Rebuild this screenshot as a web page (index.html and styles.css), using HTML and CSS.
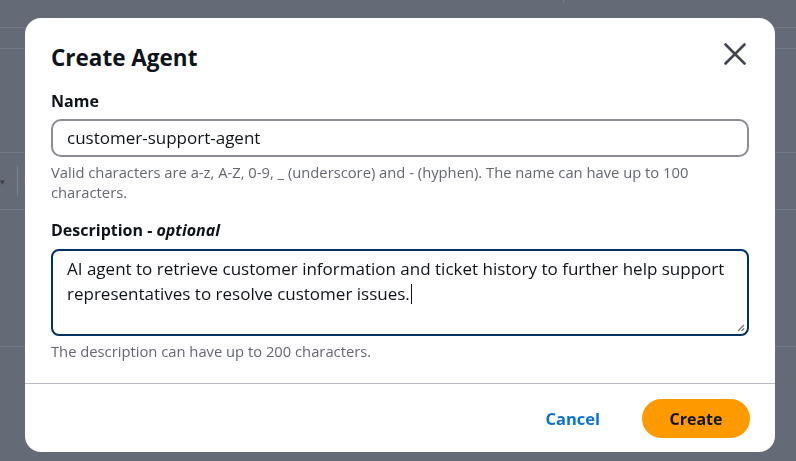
FILE: index.html
```html
<!DOCTYPE html>
<html lang="en">
<head>
<meta charset="utf-8">
<title>Create Agent</title>
<link rel="stylesheet" href="styles.css">
</head>
<body>
<div class="page">
  <div class="row row-top"><span class="tick"></span></div>
  <div class="row row-2"></div>
  <div class="row row-3"></div>
  <div class="row row-4"><span class="caret-down">▾</span><span class="vsep"></span></div>
  <div class="row row-5"></div>
</div>

<div class="modal" role="dialog" aria-labelledby="title">
  <div class="modal-body">
    <div class="modal-head">
      <h2 id="title" class="title">Create Agent</h2>
      <button class="close" aria-label="Close">
        <svg width="22" height="22" viewBox="0 0 22 22"><path d="M1.5 1.5 L20.5 20.5 M20.5 1.5 L1.5 20.5" stroke="#424650" stroke-width="2.6" stroke-linecap="round" fill="none"/></svg>
      </button>
    </div>

    <div class="field">
      <label class="label">Name</label>
      <div class="input">customer-support-agent</div>
      <p class="hint">Valid characters are a-z, A-Z, 0-9, _ (underscore) and - (hyphen). The name can have up to 100 characters.</p>
    </div>

    <div class="field field-desc">
      <label class="label">Description - <em>optional</em></label>
      <div class="textarea">AI agent to retrieve customer information and ticket history to further help support representatives to resolve customer issues.<span class="cursor"></span>
        <svg class="grip" width="10" height="10" viewBox="0 0 10 10"><path d="M9 3 L3 9 M9 6.5 L6.5 9" stroke="#6b6f76" stroke-width="1.2" fill="none"/></svg>
      </div>
      <p class="hint">The description can have up to 200 characters.</p>
    </div>
  </div>
  <div class="modal-foot">
    <button class="btn-link">Cancel</button>
    <button class="btn-primary">Create</button>
  </div>
</div>
</body>
</html>
```

FILE: styles.css
```css
* { box-sizing: border-box; }
html, body { margin: 0; height: 100%; }
body {
  background: #656b76;
  font-family: "Open Sans", "Noto Sans", sans-serif;
  color: #0f141a;
  overflow: hidden;
}

.page { display: flex; flex-direction: column; }
.row { border-bottom: 1px solid #737a85; position: relative; }
.row-top { height: 28px; }
.row-2 { height: 21px; }
.row-3 { height: 104px; }
.row-4 { height: 57px; display: flex; align-items: center; gap: 12px; }
.row-5 { height: 137px; }
.tick { position: absolute; left: 563px; top: 0; width: 1px; height: 3px; background: #7a808a; }
.caret-down { color: #3b4048; font-size: 9px; margin-left: 0; line-height: 1; }
.vsep { width: 1px; height: 30px; background: #7a808a; }

.modal {
  position: fixed;
  left: 25px;
  top: 18px;
  width: 750px;
  height: 434px;
  background: #fff;
  border-radius: 16px;
  display: flex;
  flex-direction: column;
}
.modal-body { padding: 24px 26px 0 26px; }
.modal-head { display: flex; justify-content: space-between; align-items: flex-start; }
.title { margin: 0; font-size: 22.5px; line-height: 32px; font-weight: 700; color: #0f141a; }
.close {
  border: 0; background: none; padding: 0; margin: 1px 3px 0 0;
  width: 22px; height: 22px; display: flex; cursor: pointer;
}

.field { margin-top: 16px; }
.field-desc { margin-top: 17px; }
.label { display: block; font-size: 16px; line-height: 22px; font-weight: 700; color: #0f141a; }
.label em { font-weight: 700; font-style: italic; }

.input {
  margin-top: 7px;
  height: 38px;
  border: 2px solid #8c8c94;
  border-radius: 10px;
  padding: 0 14px;
  font-size: 17px;
  line-height: 34px;
  color: #0f141a;
}
.hint {
  margin: 5px 0 0;
  font-size: 14.75px;
  line-height: 20px;
  color: #656871;
}

.textarea {
  position: relative;
  margin-top: 8px;
  height: 87px;
  border: 2px solid #033160;
  border-radius: 8px;
  padding: 5px 14px;
  font-size: 17px;
  line-height: 25px;
  color: #0f141a;
}
.cursor { display: inline-block; width: 1px; height: 20px; background: #0f141a; vertical-align: -4px; margin-left: 1px; }
.grip { position: absolute; right: 2px; bottom: 2px; }

.modal-foot {
  margin-top: auto;
  border-top: 1px solid #b4bbc3;
  padding: 15px 25px 14px;
  display: flex;
  justify-content: flex-end;
  align-items: center;
  gap: 22px;
}
.btn-link {
  border: 0; background: none; padding: 0 20px;
  font-family: inherit; font-size: 16.5px; font-weight: 700; color: #0972d3;
  line-height: 38px;
}
.btn-primary {
  border: 0; background: #ff9900; color: #0f141a;
  font-family: inherit; font-size: 16px; font-weight: 700;
  width: 108px; height: 39px; border-radius: 20px;
}
```
